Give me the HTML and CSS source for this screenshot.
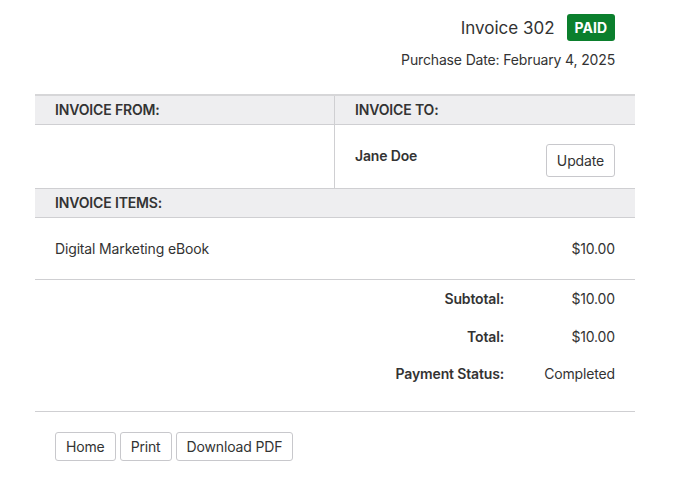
FILE: index.html
```html
<!DOCTYPE html>
<html>
<head>
<meta charset="utf-8">
<link rel="stylesheet" href="styles.css">
</head>
<body>
<div class="page">
  <header class="head">
    <div class="title-row">
      <h1 class="title">Invoice 302</h1>
      <span class="badge">PAID</span>
    </div>
    <div class="date">Purchase Date: February 4, 2025</div>
  </header>

  <div class="parties">
    <div class="th th-left">INVOICE FROM:</div>
    <div class="th">INVOICE TO:</div>
    <div class="td td-left"></div>
    <div class="td to-cell">
      <span class="name">Jane Doe</span>
      <button class="btn">Update</button>
    </div>
  </div>

  <div class="section-head">INVOICE ITEMS:</div>
  <div class="item">
    <span>Digital Marketing eBook</span>
    <span>$10.00</span>
  </div>

  <div class="totals">
    <div class="label">Subtotal:</div><div class="value">$10.00</div>
    <div class="label">Total:</div><div class="value">$10.00</div>
    <div class="label">Payment Status:</div><div class="value">Completed</div>
  </div>

  <div class="actions">
    <button class="btn">Home</button>
    <button class="btn">Print</button>
    <button class="btn">Download PDF</button>
  </div>
</div>
</body>
</html>
```

FILE: styles.css
```css
* { box-sizing: border-box; }
body {
  margin: 0;
  font-family: Inter, "Noto Sans", sans-serif;
  color: #333;
  font-size: 14px;
  letter-spacing: -0.15px;
  background: #fff;
}
.page {
  width: 600px;
  margin-left: 35px;
}
.head {
  padding: 14px 20px 0 0;
  display: flex;
  flex-direction: column;
  align-items: flex-end;
}
.title-row {
  display: flex;
  align-items: center;
  gap: 12px;
}
.title {
  margin: 0;
  font-size: 17px;
  font-weight: 400;
  letter-spacing: 0;
  color: #333;
}
.badge {
  background: #0b7f2d;
  color: #fff;
  font-weight: 700;
  font-size: 14px;
  letter-spacing: 0;
  height: 27px;
  line-height: 27px;
  padding: 0 8px;
  border-radius: 3px;
}
.date {
  margin-top: 10px;
  font-size: 14px;
  line-height: 18px;
}
.parties {
  margin-top: 25px;
  display: grid;
  grid-template-columns: 300px 300px;
  border-top: 2px solid #d6d6d8;
}
.th, .section-head {
  background: #eeeef0;
  font-weight: 600;
  height: 29px;
  line-height: 28px;
  padding: 0 20px;
  border-bottom: 1px solid #cfcfd2;
}
.th-left, .td-left { border-right: 1px solid #cfcfd2; }
.td {
  height: 64px;
  border-bottom: 1px solid #cfcfd2;
}
.to-cell {
  display: flex;
  justify-content: space-between;
  align-items: flex-start;
  padding: 19px 20px 0 20px;
}
.name {
  font-weight: 600;
  margin-top: 3px;
}
.btn {
  font-family: inherit;
  font-size: 14px;
  letter-spacing: -0.15px;
  color: #333;
  background: #fff;
  border: 1px solid #c8c8cc;
  border-radius: 3px;
  height: 29px;
  padding: 0 10px;
}
.to-cell .btn { height: 33px; }
.item {
  display: flex;
  justify-content: space-between;
  padding: 0 20px;
  height: 62px;
  align-items: center;
  border-bottom: 1px solid #cfcfd2;
}
.totals {
  display: grid;
  grid-template-columns: 1fr 111px;
  grid-auto-rows: 37.5px;
  padding: 0 20px 18px 0;
  align-items: center;
  border-bottom: 1px solid #cfcfd2;
}
.label { text-align: right; font-weight: 600; }
.value { text-align: right; }
.actions {
  padding: 20px 20px;
  display: flex;
  gap: 4px;
}
```
